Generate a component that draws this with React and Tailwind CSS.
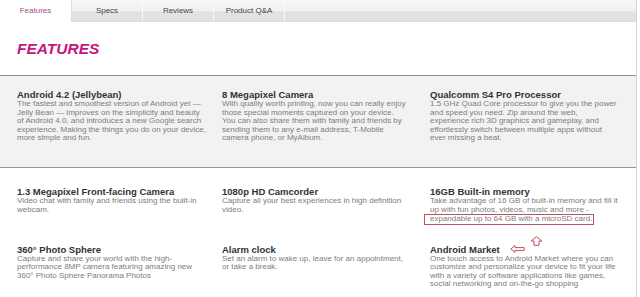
const tabs = ["Features", "Specs", "Reviews", "Product Q&A"];

const topRow = [
  {
    title: "Android 4.2 (Jellybean)",
    lines: [
      "The fastest and smoothest version of Android yet —",
      "Jelly Bean — improves on the simplicity and beauty",
      "of Android 4.0, and introduces a new Google search",
      "experience. Making the things you do on your device,",
      "more simple and fun.",
    ],
  },
  {
    title: "8 Megapixel Camera",
    lines: [
      "With quality worth printing, now you can really enjoy",
      "those special moments captured on your device.",
      "You can also share them with family and friends by",
      "sending them to any e-mail address, T-Mobile",
      "camera phone, or MyAlbum.",
    ],
  },
  {
    title: "Qualcomm S4 Pro Processor",
    lines: [
      "1.5 GHz Quad Core processor to give you the power",
      "and speed you need. Zip around the web,",
      "experience rich 3D graphics and gameplay, and",
      "effortlessly switch between multiple apps without",
      "ever missing a beat.",
    ],
  },
];

const midRow = [
  {
    title: "1.3 Megapixel Front-facing Camera",
    lines: ["Video chat with family and friends using the built-in", "webcam."],
  },
  {
    title: "1080p HD Camcorder",
    lines: ["Capture all your best experiences in high definition", "video."],
  },
  {
    title: "16GB Built-in memory",
    lines: [
      "Take advantage of 16 GB of built-in memory and fill it",
      "up with fun photos, videos, music and more -",
    ],
    boxed: "expandable up to 64 GB with a microSD card.",
  },
];

const lastRow = [
  {
    title: "360° Photo Sphere",
    lines: [
      "Capture and share your world with the high-",
      "performance 8MP camera featuring amazing new",
      "360° Photo Sphere Panorama Photos",
    ],
  },
  {
    title: "Alarm clock",
    lines: ["Set an alarm to wake up, leave for an appointment,", "or take a break."],
  },
  {
    title: "Android Market",
    lines: [
      "One touch access to Android Market where you can",
      "customize and personalize your device to fit your life",
      "with a variety of software applications like games,",
      "social networking and on-the-go shopping",
    ],
    arrows: true,
  },
];

function Feature({ item, width }) {
  return (
    <div className={`relative ${width} shrink-0`}>
      <p className="text-[9.5px] leading-[10px] font-bold text-[#333] whitespace-nowrap">
        {item.title}
      </p>
      <div className="text-[8px] leading-[8.6px] text-[#7d7d7d] whitespace-nowrap">
        {item.lines.map((l) => (
          <div key={l}>{l}</div>
        ))}
        {item.boxed && (
          <div className="inline-block -ml-[6px] pl-[5px] pr-[1px] border border-[#c0505c] leading-[8.5px]">
            {item.boxed}
          </div>
        )}
      </div>
      {item.arrows && (
        <>
          <svg className="absolute left-[80px] top-[0px]" width="15" height="8" viewBox="0 0 15 8">
            <polygon
              points="0.8,4 5,0.6 5,2.6 14.2,2.6 14.2,5.4 5,5.4 5,7.4"
              fill="none"
              stroke="#c0505c"
              strokeWidth="1"
            />
          </svg>
          <svg className="absolute left-[100px] top-[-9px]" width="13" height="10" viewBox="0 0 13 10">
            <polygon
              points="6.5,0.7 12,5 9,5 9,9.3 4,9.3 4,5 1,5"
              fill="none"
              stroke="#c0505c"
              strokeWidth="1"
            />
          </svg>
        </>
      )}
    </div>
  );
}

function Row({ items }) {
  return (
    <div className="flex pl-[17px]">
      <Feature item={items[0]} width="w-[205px]" />
      <Feature item={items[1]} width="w-[208px]" />
      <Feature item={items[2]} width="flex-1" />
    </div>
  );
}

export default function App() {
  return (
    <div className="w-[640px] h-[297px] overflow-hidden bg-white font-['Liberation_Sans',Arial,sans-serif]">
      <div className="w-[637px] border-r border-[#d6d6d6]">
        <div className="flex h-[22px] bg-[linear-gradient(to_bottom,#f6f6f6_0%,#f1f1f1_52%,#e2e2e2_56%,#e2e2e2_100%)] border-b border-[#dcdcdc]">
          {tabs.map((t, i) =>
            i === 0 ? (
              <div
                key={t}
                className="w-[72px] h-[22px] bg-white border-r border-[#dcdcdc] flex items-center justify-center text-[8px] text-[#a8498c]"
              >
                {t}
              </div>
            ) : (
              <div
                key={t}
                className="w-[71px] flex items-center justify-center text-[8px] text-[#444] border-r border-[#fafafa]"
              >
                {t}
              </div>
            )
          )}
        </div>

        <div className="h-[54px] flex items-center pl-[17px] border-b border-[#8f8f8f]">
          <h1 className="text-[15.5px] font-bold italic text-[#c8157c] leading-none pt-[1px]">
            FEATURES
          </h1>
        </div>

        <div className="bg-[#f2f2f2] pt-[14px] pb-[24px] border-b border-[#959595]">
          <Row items={topRow} />
        </div>

        <div className="flex flex-col gap-[20px] pt-[19px] pb-[20px]">
          <Row items={midRow} />
          <Row items={lastRow} />
        </div>
      </div>
    </div>
  );
}
